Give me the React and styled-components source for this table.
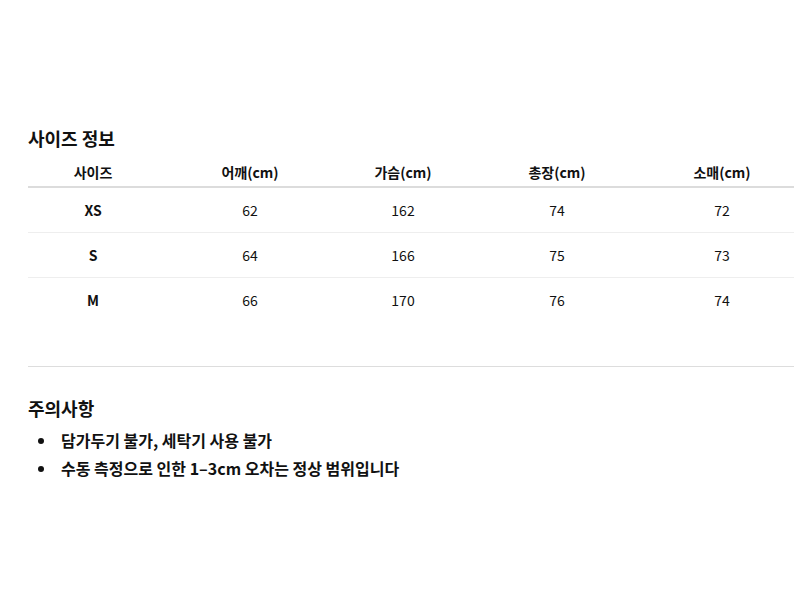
import styled, { createGlobalStyle } from 'styled-components';

const sizes = [
    { name: 'XS', shoulder: 62, chest: 162, length: 74, sleeve: 72 },
    { name: 'S', shoulder: 64, chest: 166, length: 75, sleeve: 73 },
    { name: 'M', shoulder: 66, chest: 170, length: 76, sleeve: 74 },
];

const notes = [
    '담가두기 불가, 세탁기 사용 불가',
    '수동 측정으로 인한 1–3cm 오차는 정상 범위입니다',
];

export default function App() {
    return (
        <Page>
            <GlobalStyle />
            <Section>
                <Title>사이즈 정보</Title>
                <Table>
                    <HeadRow>
                        <HeadCell>사이즈</HeadCell>
                        <HeadCell>어깨(cm)</HeadCell>
                        <HeadCell>가슴(cm)</HeadCell>
                        <HeadCell>총장(cm)</HeadCell>
                        <HeadCell>소매(cm)</HeadCell>
                    </HeadRow>
                    {sizes.map((s, i) => (
                        <Row key={s.name} $last={i === sizes.length - 1}>
                            <SizeCell>{s.name}</SizeCell>
                            <Cell>{s.shoulder}</Cell>
                            <Cell>{s.chest}</Cell>
                            <Cell>{s.length}</Cell>
                            <Cell>{s.sleeve}</Cell>
                        </Row>
                    ))}
                </Table>
            </Section>
            <Divider />
            <Section>
                <Title>주의사항</Title>
                <NoteList>
                    {notes.map((n) => (
                        <li key={n}>{n}</li>
                    ))}
                </NoteList>
            </Section>
        </Page>
    );
}

const GlobalStyle = createGlobalStyle`
    body {
        margin: 0;
        background: #fff;
        color: #111;
        font-family: "Noto Sans CJK KR", "Noto Sans", sans-serif;
    }
`;

const Page = styled.div`
    padding: 125px 6px 0 28px;
`;

const Section = styled.div``;

const Title = styled.h2`
    margin: 0;
    font-size: 18px;
    font-weight: 700;
    line-height: 26px;
`;

const Table = styled.div`
    margin-top: 6px;
`;

const columns = '130px 184px 122px 186px 1fr';

const HeadRow = styled.div`
    display: grid;
    grid-template-columns: ${columns};
    height: 29px;
    align-items: center;
    border-bottom: 2px solid #dcdcdc;
`;

const HeadCell = styled.div`
    text-align: center;
    font-size: 14px;
    font-weight: 600;
`;

const Row = styled.div`
    display: grid;
    grid-template-columns: ${columns};
    height: 44px;
    align-items: center;
    border-bottom: 1px solid ${(p) => (p.$last ? 'transparent' : '#eeeeee')};
`;

const Cell = styled.div`
    text-align: center;
    font-size: 14px;
`;

const SizeCell = styled(Cell)`
    font-weight: 700;
`;

const Divider = styled.hr`
    margin: 43px 0 28px;
    border: none;
    border-top: 1px solid #dddddd;
`;

const NoteList = styled.ul`
    margin: 5px 0 0;
    padding-left: 29px;

    li {
        padding-left: 4px;
        font-size: 16px;
        font-weight: 700;
        line-height: 28px;
    }
`;
